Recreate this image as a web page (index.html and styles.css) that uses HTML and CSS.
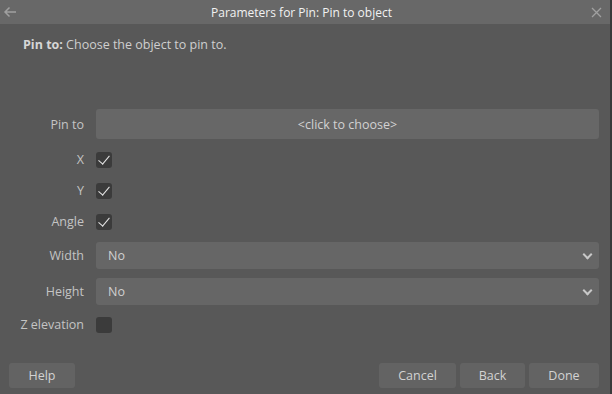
FILE: index.html
```html
<!DOCTYPE html>
<html lang="en">
<head>
  <meta charset="UTF-8">
  <meta name="viewport" content="width=device-width, initial-scale=1.0">
  <title>Parameters for Pin</title>
  <link rel="stylesheet" href="styles.css">
</head>
<body>
  <div class="dialog">
    <div class="titlebar">
      <span class="title-icon back">
        <svg width="14" height="12" viewBox="0 0 14 12"><path d="M13 6H2M6.5 1.5L2 6l4.5 4.5" fill="none" stroke="#a0a0a0" stroke-width="1.5"/></svg>
      </span>
      <span class="title">Parameters for Pin: Pin to object</span>
      <span class="title-icon close">
        <svg width="11" height="11" viewBox="0 0 11 11"><path d="M1 1l9 9M10 1l-9 9" fill="none" stroke="#a0a0a0" stroke-width="1.3"/></svg>
      </span>
    </div>

    <div class="content">
      <p class="intro"><b>Pin to:</b> Choose the object to pin to.</p>

      <div class="form">
        <div class="row row-pick">
          <label>Pin to</label>
          <button class="pick">&lt;click to choose&gt;</button>
        </div>
        <div class="row row-check">
          <label>X</label>
          <span class="check on"></span>
        </div>
        <div class="row row-check">
          <label>Y</label>
          <span class="check on"></span>
        </div>
        <div class="row row-check">
          <label>Angle</label>
          <span class="check on"></span>
        </div>
        <div class="row row-select">
          <label>Width</label>
          <div class="select">No</div>
        </div>
        <div class="row row-select">
          <label>Height</label>
          <div class="select">No</div>
        </div>
        <div class="row row-check">
          <label>Z elevation</label>
          <span class="check"></span>
        </div>
      </div>
    </div>

    <div class="footer">
      <button class="btn btn-help">Help</button>
      <div class="actions">
        <button class="btn btn-cancel">Cancel</button>
        <button class="btn btn-back">Back</button>
        <button class="btn btn-done">Done</button>
      </div>
    </div>
  </div>
</body>
</html>
```

FILE: styles.css
```css
/* Base */
* {
  margin: 0;
  padding: 0;
  box-sizing: border-box;
}

body {
  font-family: 'Open Sans', 'Noto Sans', sans-serif;
  background-color: #585858;
  width: 612px;
  height: 394px;
  overflow: hidden;
}

.dialog {
  width: 612px;
  height: 394px;
  display: flex;
  flex-direction: column;
  background-color: #585858;
  border-right: 2px solid #3a3a3a;
}

/* Title bar */
.titlebar {
  height: 24px;
  background-color: #686868;
  display: flex;
  align-items: center;
  justify-content: space-between;
  padding: 0 8px 0 3px;
}

.title {
  color: #f2f2f2;
  font-size: 12px;
  padding-right: 2px;
}

.title-icon {
  display: flex;
  align-items: center;
  width: 14px;
}

.title-icon.close {
  justify-content: flex-end;
}

/* Content */
.content {
  flex: 1;
  padding: 13px 11px 0 0;
}

.intro {
  margin-left: 23px;
  font-size: 12.5px;
  color: #cfcfcf;
  line-height: 16px;
}

.intro b {
  font-weight: 700;
  color: #d6d6d6;
}

.form {
  margin-top: 56px;
  display: flex;
  flex-direction: column;
}

.row {
  display: flex;
  align-items: center;
  gap: 12px;
}

.row label {
  width: 84px;
  text-align: right;
  font-size: 12.5px;
  color: #c4c4c4;
}

.row-pick {
  height: 30px;
  margin-bottom: 5px;
}

.row-check {
  height: 31px;
}

.row-select {
  height: 27px;
  margin: 4.5px 0;
}

.pick {
  flex: 1;
  height: 30px;
  border: none;
  border-radius: 3px;
  background-color: #676767;
  color: #d2d2d2;
  font-family: inherit;
  font-size: 12.5px;
}

.check {
  width: 16px;
  height: 16px;
  border-radius: 3px;
  background-color: #3b3b3b;
  position: relative;
}

.check.on::after {
  content: "";
  position: absolute;
  left: 5px;
  top: 1px;
  width: 5px;
  height: 10px;
  border-right: 1.5px solid #e6e6e6;
  border-bottom: 1.5px solid #e6e6e6;
  transform: rotate(40deg);
}

.select {
  flex: 1;
  height: 27px;
  border-radius: 3px;
  background-color: #666666;
  color: #d0d0d0;
  font-size: 12.5px;
  display: flex;
  align-items: center;
  padding-left: 12px;
  position: relative;
}

.select::after {
  content: "";
  position: absolute;
  right: 8px;
  top: 9px;
  width: 5px;
  height: 5px;
  border-right: 2px solid #c8c8c8;
  border-bottom: 2px solid #c8c8c8;
  transform: rotate(45deg);
}

/* Footer */
.footer {
  display: flex;
  justify-content: space-between;
  align-items: center;
  padding: 0 11px 6px 9px;
}

.actions {
  display: flex;
  gap: 4px;
}

.btn {
  height: 25px;
  border: none;
  border-radius: 3px;
  background-color: #636363;
  color: #d2d2d2;
  font-family: inherit;
  font-size: 12.5px;
}

.btn-help {
  width: 66px;
}

.btn-cancel {
  width: 77px;
}

.btn-back {
  width: 65px;
}

.btn-done {
  width: 70px;
}
```
